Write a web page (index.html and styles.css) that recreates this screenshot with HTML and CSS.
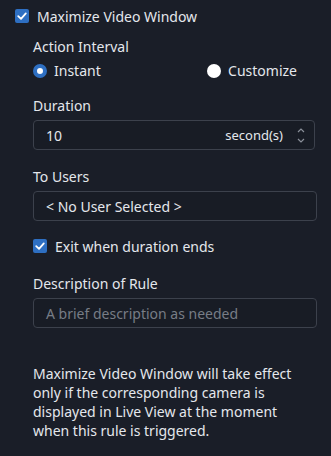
FILE: index.html
```html
<!DOCTYPE html>
<html lang="en">
<head>
  <meta charset="UTF-8">
  <title>Maximize Video Window</title>
  <link rel="stylesheet" href="styles.css">
</head>
<body>
  <div class="panel">
    <label class="check head-check">
      <span class="box checked">
        <svg viewBox="0 0 14 14" width="14" height="14"><path d="M3.2 7.2 L6 9.8 L10.8 4.4" fill="none" stroke="#fff" stroke-width="1.8" stroke-linecap="round" stroke-linejoin="round"/></svg>
      </span>
      <span>Maximize Video Window</span>
    </label>

    <div class="group">
      <div class="label">Action Interval</div>
      <div class="radios">
        <label class="radio"><span class="dot on"></span>Instant</label>
        <label class="radio"><span class="dot"></span>Customize</label>
      </div>

      <div class="label duration">Duration</div>
      <div class="field spin">
        <span class="value">10</span>
        <span class="unit">second(s)</span>
        <span class="arrows">
          <svg viewBox="0 0 10 8" width="10" height="8"><path d="M2 6 L5 3 L8 6" fill="none" stroke="#8a8f99" stroke-width="1.2"/></svg>
          <svg viewBox="0 0 10 8" width="10" height="8"><path d="M2 2 L5 5 L8 2" fill="none" stroke="#8a8f99" stroke-width="1.2"/></svg>
        </span>
      </div>

      <div class="label users">To Users</div>
      <div class="field wide">
        <span class="value">&lt; No User Selected &gt;</span>
      </div>

      <label class="check exit-check">
        <span class="box checked">
          <svg viewBox="0 0 14 14" width="14" height="14"><path d="M3.2 7.2 L6 9.8 L10.8 4.4" fill="none" stroke="#fff" stroke-width="1.8" stroke-linecap="round" stroke-linejoin="round"/></svg>
        </span>
        <span>Exit when duration ends</span>
      </label>

      <div class="label desc">Description of Rule</div>
      <div class="field wide">
        <span class="placeholder">A brief description as needed</span>
      </div>

      <p class="note">Maximize Video Window will take effect only if the corresponding camera is displayed in Live View at the moment when this rule is triggered.</p>
    </div>
  </div>
</body>
</html>
```

FILE: styles.css
```css
* {
  margin: 0;
  padding: 0;
  box-sizing: border-box;
}

body {
  background-color: #1a1e28;
  color: #e4e7ec;
  font-family: 'Noto Sans', sans-serif;
  font-size: 14px;
}

.panel {
  padding: 6px 14px 0 15px;
}

/* Checkboxes */
.check {
  display: flex;
  align-items: center;
  gap: 8px;
  height: 20px;
}

.box {
  width: 14px;
  height: 14px;
  border-radius: 2px;
  display: flex;
  align-items: center;
  justify-content: center;
}

.box.checked {
  background-color: #2e6fc2;
}

.group {
  padding-left: 18px;
}

.label {
  line-height: 20px;
  margin-top: 11px;
}

.label.duration {
  margin-top: 15px;
}

.label.users {
  margin-top: 17px;
}

.label.desc {
  margin-top: 18px;
}

/* Radios */
.radios {
  display: flex;
  justify-content: space-between;
  width: 264px;
  margin-top: 4px;
}

.radio {
  display: flex;
  align-items: center;
  gap: 7px;
  line-height: 20px;
}

.dot {
  width: 14px;
  height: 14px;
  border-radius: 50%;
  background-color: #fff;
}

.dot.on {
  background-color: #fff;
  border: 4px solid #2e6fc2;
}

/* Fields */
.field {
  height: 30px;
  border: 1px solid #3c414c;
  border-radius: 4px;
  background-color: #181c25;
  display: flex;
  align-items: center;
  padding: 0 12px;
  margin-top: 4px;
}

.field.spin {
  width: 282px;
  padding-right: 8px;
}

.field.wide {
  width: 284px;
}

.value {
  flex: 1;
}

.unit {
  font-size: 13px;
  margin-right: 13px;
}

.arrows {
  display: flex;
  flex-direction: column;
  gap: 3px;
}

.placeholder {
  color: #777c86;
}

.exit-check {
  margin-top: 15px;
}

.note {
  margin-top: 36px;
  line-height: 19px;
  width: 280px;
}
```
